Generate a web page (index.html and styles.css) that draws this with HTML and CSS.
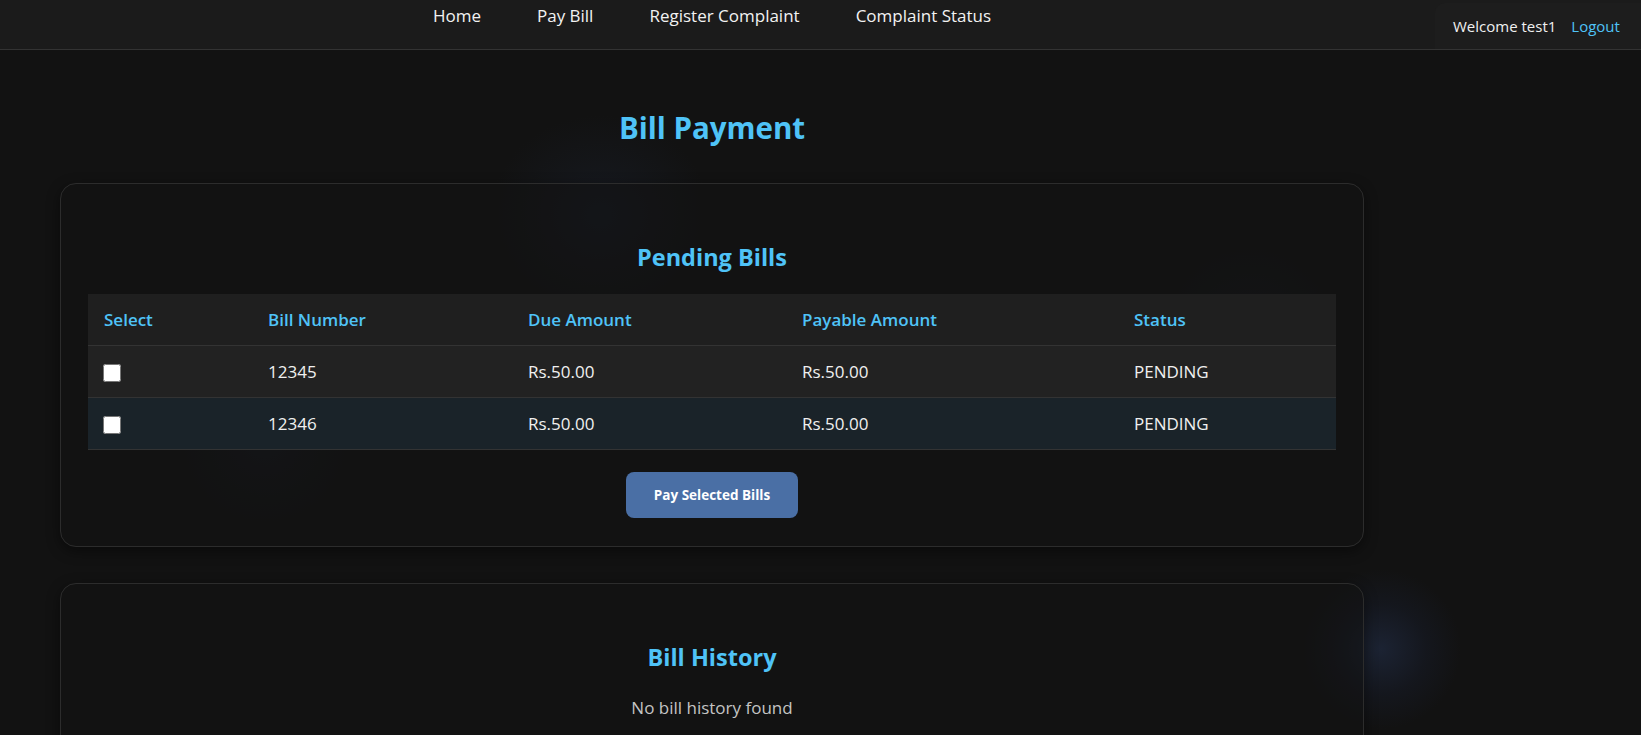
FILE: index.html
```html
<!DOCTYPE html>
<html lang="en">
<head>
<meta charset="utf-8">
<title>Bill Payment</title>
<link rel="stylesheet" href="styles.css">
</head>
<body>
<header class="topbar">
  <nav class="nav">
    <a class="nav-link" href="#">Home</a>
    <a class="nav-link" href="#">Pay Bill</a>
    <a class="nav-link" href="#">Register Complaint</a>
    <a class="nav-link" href="#">Complaint Status</a>
  </nav>
  <div class="user-box">
    <span class="welcome">Welcome test1</span>
    <a class="logout" href="#">Logout</a>
  </div>
</header>
<main class="main">
  <h1 class="page-title">Bill Payment</h1>
  <section class="card card-pending">
    <h2 class="card-title">Pending Bills</h2>
    <table class="bills">
      <thead>
        <tr>
          <th class="c-sel">Select</th>
          <th class="c-num">Bill Number</th>
          <th class="c-due">Due Amount</th>
          <th class="c-pay">Payable Amount</th>
          <th class="c-st">Status</th>
        </tr>
      </thead>
      <tbody>
        <tr class="row-a">
          <td><input type="checkbox" class="chk"></td>
          <td>12345</td>
          <td>Rs.50.00</td>
          <td>Rs.50.00</td>
          <td>PENDING</td>
        </tr>
        <tr class="row-b">
          <td><input type="checkbox" class="chk"></td>
          <td>12346</td>
          <td>Rs.50.00</td>
          <td>Rs.50.00</td>
          <td>PENDING</td>
        </tr>
      </tbody>
    </table>
    <div class="actions">
      <button class="pay-btn" type="button">Pay Selected Bills</button>
    </div>
  </section>
  <section class="card card-history">
    <h2 class="card-title">Bill History</h2>
    <p class="empty">No bill history found</p>
  </section>
</main>
</body>
</html>
```
FILE: styles.css
```css
* { box-sizing: border-box; }
html, body { height: 100%; }
body {
  margin: 0;
  font-family: "Open Sans", "Noto Sans", sans-serif;
  color: #e8e8e8;
  background-color: #121212;
  background-image:
    radial-gradient(circle at 1381px 649px, rgba(42, 60, 100, 0.4) 0, rgba(30, 42, 75, 0.2) 45px, rgba(18, 18, 18, 0) 80px),
    radial-gradient(ellipse 110px 100px at 600px 215px, rgba(30, 40, 60, 0.35), rgba(18, 18, 18, 0)),
    radial-gradient(ellipse 90px 90px at 265px 440px, rgba(28, 38, 55, 0.3), rgba(18, 18, 18, 0)),
    radial-gradient(ellipse 90px 90px at 1250px 330px, rgba(28, 40, 55, 0.3), rgba(18, 18, 18, 0));
  background-repeat: no-repeat;
  overflow: hidden;
}
.topbar {
  display: flex;
  height: 50px;
  background: #1b1b1b;
  border-bottom: 1px solid #333333;
}
.nav {
  width: 1424px;
  display: flex;
  justify-content: center;
  align-items: flex-start;
  padding-top: 4px;
}
.nav-link {
  color: #f2f2f2;
  text-decoration: none;
  font-size: 17px;
  line-height: 24px;
  padding: 0 28px;
}
.user-box {
  flex: 1;
  margin-left: 11px;
  margin-top: 3px;
  background: #1d1d1d;
  border-top-left-radius: 10px;
  display: flex;
  align-items: center;
  padding-left: 18px;
  padding-bottom: 1px;
  gap: 15px;
  font-size: 15px;
}
.welcome { color: #f0f0f0; }
.logout { color: #4fc3f7; text-decoration: none; }
.main {
  width: 1424px;
  padding: 0 60px;
}
.page-title {
  margin: 0;
  padding-top: 57px;
  height: 133px;
  text-align: center;
  color: #4fc3f7;
  font-size: 29.5px;
  font-weight: 700;
  line-height: 42px;
}
.card {
  border: 1px solid #2c2c2c;
  border-radius: 16px;
  background: rgba(18, 18, 18, 0.55);
  box-shadow: 0 4px 14px rgba(0, 0, 0, 0.45);
  padding: 0 27px;
}
.card-pending { height: 364px; }
.card-history { margin-top: 36px; height: 200px; }
.card-title {
  margin: 0;
  padding-top: 56px;
  height: 110px;
  text-align: center;
  color: #4fc3f7;
  font-size: 23.5px;
  font-weight: 700;
  line-height: 34px;
}
.card-history .card-title { height: 112px; }
.bills {
  width: 100%;
  border-collapse: collapse;
  font-size: 17px;
}
.bills th, .bills td {
  text-align: left;
  padding: 0 16px;
  border-bottom: 1px solid #333333;
}
.bills th {
  height: 51px;
  background: #1f1f1f;
  color: #4fc3f7;
  font-weight: 600;
}
.bills td { height: 52px; color: #f0f0f0; }
.row-a td { background: #222222; }
.row-b td { background: #1a2329; }
.c-sel { width: 164px; }
.c-num { width: 260px; }
.c-due { width: 274px; }
.c-pay { width: 332px; }
.chk {
  width: 18px;
  height: 18px;
  margin: 0 0 0 -1px;
  vertical-align: middle;
}
.actions {
  display: flex;
  justify-content: center;
  padding-top: 22px;
}
.pay-btn {
  width: 172px;
  height: 46px;
  border: none;
  border-radius: 8px;
  background: #4a6fa5;
  color: #ffffff;
  font-family: "Open Sans", "Noto Sans", sans-serif;
  font-size: 13.5px;
  font-weight: 700;
}
.empty {
  margin: 0;
  text-align: center;
  color: #c4c4c4;
  font-size: 17px;
  line-height: 24px;
}
```
